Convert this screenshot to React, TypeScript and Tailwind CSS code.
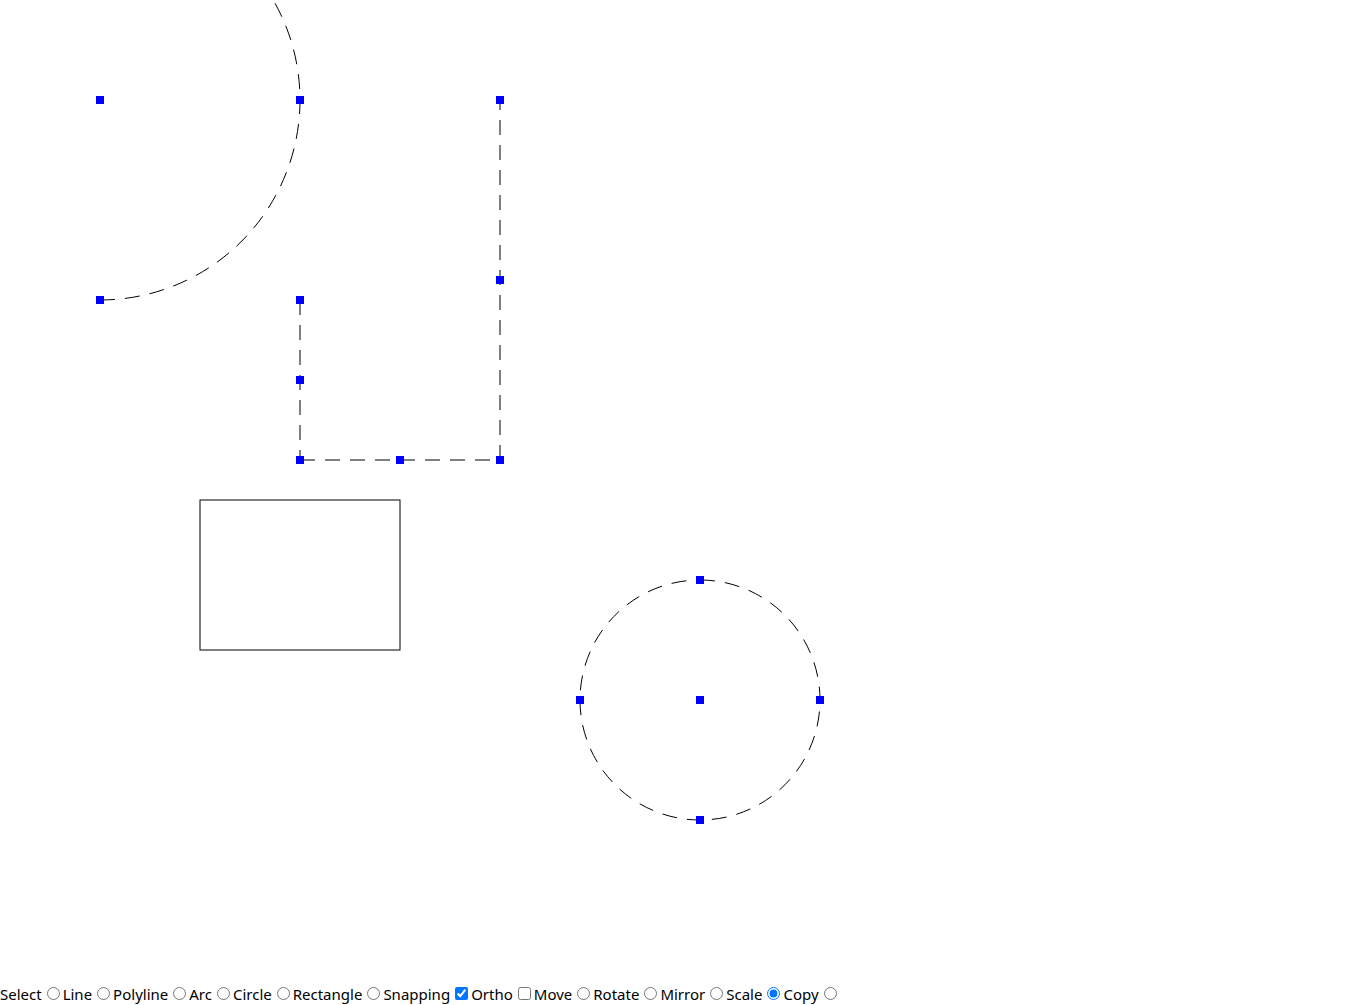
import React, { useState } from 'react';

type Pt = [number, number];

const handles: Pt[] = [
  // arc
  [100, 100], [300, 100], [100, 300],
  // polyline
  [300, 300], [300, 380], [300, 460], [400, 460], [500, 460], [500, 280], [500, 100],
  // circle
  [700, 700], [700, 580], [820, 700], [700, 820], [580, 700],
];

const tools = ['Line', 'Polyline', 'Arc', 'Circle', 'Rectangle'];
const edits = ['Move', 'Rotate', 'Mirror', 'Scale', 'Copy'];

export default function App() {
  const [tool, setTool] = useState('');
  const [snapping, setSnapping] = useState(true);
  const [ortho, setOrtho] = useState(false);
  const [edit, setEdit] = useState('Scale');

  const radio = 'ml-[5px] mr-[3px] mt-[3px] align-baseline';

  return (
    <div className="flex flex-col h-screen w-full bg-white overflow-hidden font-['Segoe_UI','Noto_Sans',sans-serif] text-[15px] text-black">
      <svg className="block flex-1 w-full" xmlns="http://www.w3.org/2000/svg">
        <g fill="none" stroke="black" strokeWidth={1} strokeDasharray="15,10">
          <path d="M 100 300 A 200 200 0 0 0 100 -100" />
          <line x1={300} y1={300} x2={300} y2={460} />
          <line x1={300} y1={460} x2={500} y2={460} />
          <line x1={500} y1={460} x2={500} y2={100} />
          <path d="M 700 580 A 120 120 0 1 1 700 820 A 120 120 0 1 1 700 580" />
        </g>
        <rect x={200} y={500} width={200} height={150} fill="none" stroke="black" strokeWidth={1} />
        <g fill="#0000ff">
          {handles.map(([x, y], i) => (
            <rect key={i} x={x - 4} y={y - 4} width={8} height={8} />
          ))}
        </g>
      </svg>
      <div className="h-[21px] leading-[21px] whitespace-nowrap">
        <label>Select<input type="radio" name="tool" className={radio} checked={tool === 'Select'} onChange={() => setTool('Select')} /></label>
        {tools.map((t) => (
          <label key={t}>{t}<input type="radio" name="tool" className={radio} checked={tool === t} onChange={() => setTool(t)} /></label>
        ))}
        <label>Snapping<input type="checkbox" className={radio} checked={snapping} onChange={() => setSnapping(!snapping)} /></label>
        <label>Ortho<input type="checkbox" className={radio} checked={ortho} onChange={() => setOrtho(!ortho)} /></label>
        {edits.map((t) => (
          <label key={t}>{t}<input type="radio" name="edit" className={radio} checked={edit === t} onChange={() => setEdit(t)} /></label>
        ))}
      </div>
    </div>
  );
}
